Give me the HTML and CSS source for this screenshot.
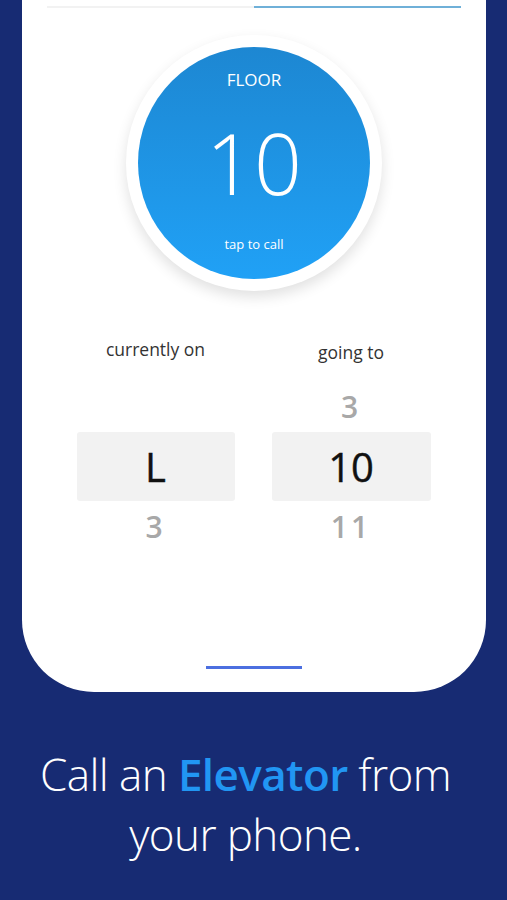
FILE: index.html
```html
<!DOCTYPE html>
<html lang="en">
<head>
    <meta charset="UTF-8">
    <meta name="viewport" content="width=device-width, initial-scale=1.0">
    <title>Elevator - Call</title>
    <link rel="stylesheet" href="styles.css">
</head>
<body>
    <div class="phone">
        <div class="tabs">
            <span class="tab"></span>
            <span class="tab active"></span>
        </div>

        <div class="ring">
            <div class="call-button">
                <span class="floor-label">FLOOR</span>
                <span class="floor-number">10</span>
                <span class="tap">tap to call</span>
            </div>
        </div>

        <div class="pickers">
            <div class="picker">
                <p class="picker-label">currently on</p>
                <div class="slot"></div>
                <div class="selected">L</div>
                <div class="slot">3</div>
            </div>
            <div class="picker">
                <p class="picker-label going">going to</p>
                <div class="slot">3</div>
                <div class="selected">10</div>
                <div class="slot">11</div>
            </div>
        </div>

        <div class="home-bar"></div>
    </div>

    <h1 class="tagline">Call an <strong>Elevator</strong> from<br>your phone.</h1>
</body>
</html>
```

FILE: styles.css
```css
body {
    font-family: 'Open Sans', sans-serif;
    margin: 0;
    padding: 0;
    background: #172b73;
    color: #222;
}

.phone {
    margin: 0 21px 0 22px;
    height: 692px;
    background: #fff;
    border-radius: 0 0 72px 72px;
    display: flex;
    flex-direction: column;
    align-items: center;
}

.tabs {
    display: flex;
    width: 414px;
    padding-top: 6px;
}
.tab {
    flex: 1;
    height: 2px;
    background: #f2f2f2;
}
.tab.active { background: #6fb0d8; }

.ring {
    margin-top: 27px;
    width: 256px;
    height: 256px;
    border-radius: 50%;
    background: #fff;
    box-shadow: 0 6px 14px rgba(0, 0, 0, 0.12);
    display: flex;
    align-items: center;
    justify-content: center;
}

.call-button {
    width: 232px;
    height: 232px;
    border-radius: 50%;
    background: linear-gradient(180deg, #1d87d2, #20a1f6);
    color: #fff;
    display: flex;
    flex-direction: column;
    align-items: center;
}
.floor-label {
    margin-top: 22px;
    font-size: 17px;
    line-height: 22px;
}
.floor-number {
    margin-top: 27px;
    font-size: 84px;
    font-weight: 300;
    line-height: 90px;
}
.tap {
    margin-top: 28px;
    font-size: 13px;
    line-height: 16px;
}

.pickers {
    display: grid;
    grid-template-columns: 158px 159px;
    column-gap: 37px;
    margin-top: 46px;
    margin-right: 1px;
}
.picker {
    text-align: center;
}
.picker-label {
    margin: 0 0 20px;
    font-size: 17.5px;
    line-height: 24px;
    color: #333;
}
.picker-label.going { padding-top: 3px; margin-bottom: 17px; }

.slot {
    height: 51px;
    line-height: 51px;
    font-size: 30px;
    font-weight: 600;
    letter-spacing: 3px;
    color: #a8a8a8;
}
.selected {
    height: 69px;
    line-height: 69px;
    background: #f2f2f2;
    border-radius: 3px;
    font-size: 40px;
    font-weight: 500;
    color: #111;
    -webkit-text-stroke: 0.4px #111;
}

.home-bar {
    margin-top: auto;
    margin-bottom: 23px;
    width: 96px;
    height: 3px;
    background: #4c6fe0;
}

.tagline {
    margin: 52px 0 0;
    padding-right: 16px;
    text-align: center;
    font-family: 'Open Sans', sans-serif;
    font-weight: 300;
    font-size: 44px;
    letter-spacing: -0.6px;
    line-height: 60px;
    color: #fff;
}
.tagline strong {
    font-weight: 600;
    color: #2196f3;
}
```
